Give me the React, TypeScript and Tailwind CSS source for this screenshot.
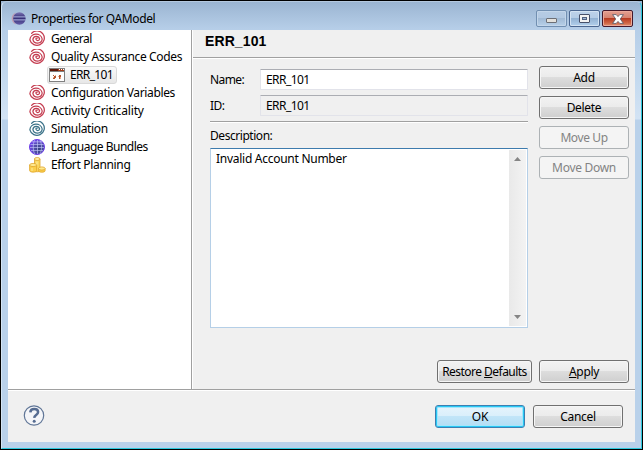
import type { ReactNode } from "react";

function Spiral({ color }: { color: string }) {
  return (
    <svg width="17" height="16" viewBox="0 0 17 16" fill="none" stroke={color} strokeLinecap="round">
      <path strokeWidth="1.250" d="M2.600 2.300A7.300 7.200 0 1 1 .9 8.800A6.200 5.800 0 0 1 13.200 8A4.700 4.600 0 0 1 3.900 8.300A3.400 3.300 0 0 1 10.600 8A1.900 1.900 0 0 1 6.900 8.200Q7 6.900 8.200 7.100" />
    </svg>
  );
}

function FormIcon() {
  return (
    <svg width="16" height="14" viewBox="0 0 16 14" shapeRendering="crispEdges">
      <rect width="16" height="14" fill="#808080" />
      <rect x="1" y="4" width="14" height="9" fill="#fff" />
      <rect x="1" y="1" width="14" height="2" fill="#a33b17" />
      <path fill="#5d170b" d="M1 1h8v2H1z" />
      <path fill="#fff" d="M10 1h1v1h-1zM12 1h1v1h-1zM14 1h1v1h-1z" />
      <path fill="#b4552e" d="M4 7h1v1H4zM5 8h2v2H5zM4 10h2v1H4zM10 7h2v2h-2zM10 9h1v2h-1z" />
      <path fill="#e9a88a" d="M6 7h1v1H6zM4 9h1v1H4zM9 8h1v1H9zM11 9h1v2h-1z" />
    </svg>
  );
}

function GlobeIcon() {
  return (
    <svg width="16" height="16" viewBox="0 0 16 16" fill="none">
      <defs>
        <radialGradient id="globe" cx=".65" cy=".65" r=".65">
          <stop stopColor="#35437e" />
          <stop offset=".6" stopColor="#5550ae" />
          <stop offset="1" stopColor="#7044e8" />
        </radialGradient>
      </defs>
      <circle cx="8" cy="8" r="7.500" fill="url(#globe)" stroke="#6d3ee8" />
      <path stroke="#c3c5fa" strokeWidth=".65" d="M1.500 5.500h13M1 8.500h14M2 11.500h12M3 2.800h10M5.500 1C3.800 5 3.800 11 5.500 15M8.500 1v14M11 1c2 4 2 10 0 14" />
    </svg>
  );
}

function CoinsIcon() {
  return (
    <svg width="17" height="16" viewBox="0 0 17 16" stroke="#dfa52b" strokeWidth=".8">
      <path fill="#fbd75e" d="M5.500 2v12c0 1 5.500 1 5.500 0V2z" />
      <ellipse cx="8.200" cy="2" rx="2.800" ry="1.500" fill="#fff0a8" />
      <path fill="#fbcf4b" d="M.6 8v5.500c0 2.200 7 2.200 7 0V8z" />
      <ellipse cx="4.100" cy="8" rx="3.500" ry="1.600" fill="#ffe98d" />
      <path fill="#fbcf4b" d="M9.600 11.500v2.200c0 2 6.500 2 6.500 0v-2.200z" />
      <ellipse cx="12.800" cy="11.500" rx="3.300" ry="1.600" fill="#ffe98d" />
      <path fill="none" stroke="#fff2b0" d="M8 4.500v3M3 11v3" />
    </svg>
  );
}

function EclipseIcon() {
  return (
    <svg width="15" height="13" viewBox="0 0 15 13">
      <defs>
        <linearGradient id="sphere" x1="0" x2="0" y1="0" y2="1">
          <stop stopColor="#7c74b5" />
          <stop offset=".45" stopColor="#342d75" />
          <stop offset="1" stopColor="#655ea8" />
        </linearGradient>
      </defs>
      <path d="M5 .6C-.8 2.500-.8 10.500 5 12.400 2 9 2 4 5 .6" fill="#bf9db2" />
      <circle cx="8.400" cy="6.500" r="6.200" fill="url(#sphere)" />
      <path d="M2.500 4.900h12M2.500 7.900h12" stroke="#b9c3ec" strokeWidth=".9" />
    </svg>
  );
}

const tree: { label: string; icon: ReactNode; cls: string; child?: boolean }[] = [
  { label: "General", icon: <Spiral color="#c43c50" />, cls: "tracking-[-0.5px]" },
  { label: "Quality Assurance Codes", icon: <Spiral color="#c43c50" />, cls: "tracking-[-0.35px]" },
  { label: "ERR_101", icon: <FormIcon />, cls: "tracking-[-0.65px]", child: true },
  { label: "Configuration Variables", icon: <Spiral color="#c43c50" />, cls: "tracking-[-0.37px]" },
  { label: "Activity Criticality", icon: <Spiral color="#c43c50" />, cls: "tracking-[-0.15px]" },
  { label: "Simulation", icon: <Spiral color="#3b7288" />, cls: "tracking-[-0.35px]" },
  { label: "Language Bundles", icon: <GlobeIcon />, cls: "tracking-[-0.5px]" },
  { label: "Effort Planning", icon: <CoinsIcon />, cls: "tracking-[-0.33px]" },
];

function Button({ children, disabled, primary, width = "w-[90px]", tracking = "tracking-[-0.3px]" }: { children: ReactNode; disabled?: boolean; primary?: boolean; width?: string; tracking?: string }) {
  const look = disabled
    ? "border-[#adb2b5] bg-[#f4f4f4] text-[#838383]"
    : primary
      ? "border-[#3c7fb1] bg-[linear-gradient(#e6f4fc_0%,#d9effb_49%,#c1e5f8_50%,#b2ddf4_100%)] text-black shadow-[inset_0_0_0_1px_#28c8f5,inset_0_0_0_2px_#a5e6fb]"
      : "border-[#707070] bg-[linear-gradient(#f2f2f2_0%,#ebebeb_49%,#dddddd_50%,#cfcfcf_100%)] text-black shadow-[inset_0_0_0_1px_#f6f6f6]";
  return (
    <button disabled={disabled} className={`flex h-[23px] shrink-0 items-center justify-center rounded-[3px] border whitespace-pre ${width} ${tracking} ${look}`}>
      <span>{children}</span>
    </button>
  );
}

function Field({ label, value, readOnly, tracking }: { label: string; value: string; readOnly?: boolean; tracking: string }) {
  return (
    <label className="flex h-[21px] items-center">
      <span className={`w-[50px] ${tracking}`}>{label}</span>
      <span className={`flex h-[21px] flex-1 items-center rounded-[1px] border border-[#e2e3ea] border-t-[#abadb3] pl-[5px] tracking-[-0.55px] ${readOnly ? "bg-[#f0f0f0]" : "bg-white"}`}>{value}</span>
    </label>
  );
}

function WindowControls() {
  return (
    <div className="mt-[8px] mr-[2px] flex gap-[2px]">
      <div className="flex h-[17px] w-[31px] items-end justify-center rounded-[2px] border border-[#718fb1] bg-[linear-gradient(#b7cce4_0%,#b2c9e2_48%,#a1bad5_50%,#b7d0e9_100%)] pb-[3px] shadow-[inset_0_0_0_1px_#c3d6ea]">
        <span className="h-[5px] w-[11px] rounded-[1px] border border-[#6c6f76] bg-[#e3e1dc]" />
      </div>
      <div className="flex h-[17px] w-[31px] items-center justify-center rounded-[2px] border border-[#4a6690] bg-[linear-gradient(#bdd2e9_0%,#b4cce6_48%,#93b2d3_50%,#b2d0ed_100%)] shadow-[inset_0_0_0_1px_#d2e2f2]">
        <span className="flex h-[9px] w-[11px] items-center justify-center rounded-[1px] border border-[#46506a] bg-[#f2f2f2]">
          <span className="h-[3px] w-[5px] border border-[#52617f] bg-[#9db8d7]" />
        </span>
      </div>
      <div className="flex h-[17px] w-[31px] items-center justify-center rounded-[2px] border border-[#43182b] bg-[linear-gradient(#e3a092_0%,#d6826f_47%,#b83c22_50%,#cf6546_80%,#df9370_100%)] shadow-[inset_0_0_0_1px_#eba99a]">
        <svg width="12" height="10" viewBox="0 0 12 10">
          <path d="M.6.600h3.600L6 2.600 7.800.600h3.600L8.300 5l3.100 4.400H7.800L6 7.400 4.200 9.400H.6L3.700 5z" fill="#fff" stroke="#535666" strokeWidth=".8" />
        </svg>
      </div>
    </div>
  );
}

export default function App() {
  return (
    <div className="flex h-[450px] w-[643px] flex-col overflow-hidden border-x border-y border-black bg-[linear-gradient(#9ab4d1_0px,#b6cee8_28px,#c5daef_80px,#d3e3f4_118px,#b9d1ea_119px)] font-['Noto_Sans','Open_Sans',sans-serif] text-[12px] leading-[18px] text-black">
      <div className="flex min-h-0 flex-1 flex-col rounded-t-[6px] border-r border-b border-t border-l border-t-[#b5c9df] border-r-[#2cc8dd] border-b-[#2cc8dd] border-l-[#d5e5f4] px-[6px] pb-[6px]">
        <header className="flex h-[28px] shrink-0 justify-between">
          <div className="flex h-[33px] items-center gap-[5px] pl-[3px]">
            <EclipseIcon />
            <span className="tracking-[-0.4px]">Properties for QAModel</span>
          </div>
          <WindowControls />
        </header>
        <main className="flex min-h-0 flex-1 flex-col bg-[#f0f0f0]">
          <div className="flex h-[359px] shrink-0">
            <nav className="w-[184px] border-r border-[#a0a0a0] bg-white">
              {tree.map((t) =>
                t.child ? (
                  <div key={t.label} className="ml-[39px] flex h-[18px] w-[70px] items-center gap-[5px] rounded-[3px] border border-[#d9d9d9] bg-linear-to-b from-[#fafafa] to-[#e7e7e7] pl-px">
                    {t.icon}
                    <span className={t.cls}>{t.label}</span>
                  </div>
                ) : (
                  <div key={t.label} className="flex h-[18px] items-center pl-[21px]">
                    <span className="w-[22px]">{t.icon}</span>
                    <span className={t.cls}>{t.label}</span>
                  </div>
                ),
              )}
            </nav>
            <section className="flex flex-1 flex-col border-l border-white">
              <h1 className="h-[28px] shrink-0 border-b border-[#a0a0a0] pl-[12px] font-['Liberation_Sans',sans-serif] text-[14px] leading-[23px] font-bold tracking-[0.1px]">ERR_101</h1>
              <div className="flex flex-1 flex-col border-t border-white pt-[7px] pr-[6px] pl-[17px]">
                <div className="flex justify-between">
                  <div className="flex w-[318px] flex-col pt-[3px]">
                    <Field label="Name:" value="ERR_101" tracking="tracking-[-0.6px]" />
                    <div className="h-[5px]" />
                    <Field label="ID:" value="ERR_101" tracking="tracking-[-0.5px]" readOnly />
                    <div className="mt-[5px] h-[2px] border-t border-b border-t-[#a0a0a0] border-b-white" />
                    <div className="mt-[4px] h-[21px] leading-[18px] tracking-[-0.45px]">Description:</div>
                    <div className="flex h-[180px] justify-between border border-[#b5cfe7] border-t-[#3d7bad] bg-white pt-px pr-px pb-px">
                      <p className="pl-[5px] tracking-[-0.27px]">Invalid Account Number</p>
                      <div className="flex w-[17px] flex-col items-center justify-between bg-[linear-gradient(90deg,#e9e9e9,#f3f3f3)] pt-[7px] pb-[7px]">
                        <svg width="7" height="4" viewBox="0 0 7 4"><path d="M3.500 0L7 4H0z" fill="#858585" /></svg>
                        <svg width="7" height="4" viewBox="0 0 7 4"><path d="M0 0h7L3.500 4z" fill="#858585" /></svg>
                      </div>
                    </div>
                  </div>
                  <div className="flex flex-col gap-[7px]">
                    <Button>Add</Button>
                    <Button>Delete</Button>
                    <Button disabled tracking="tracking-[-0.4px]">Move Up</Button>
                    <Button disabled>Move Down</Button>
                  </div>
                </div>
                <div className="mt-auto mb-[6px] flex justify-end gap-[7px]">
                  <Button width="w-[95px]" tracking="tracking-[-0.53px]">Restore <u>D</u>efaults</Button>
                  <Button><u>A</u>pply</Button>
                </div>
              </div>
            </section>
          </div>
          <footer className="flex flex-1 items-start justify-between border-t border-[#a0a0a0] pr-[12px] pl-[15px] shadow-[inset_0_1px_white]">
            <svg className="mt-[14px]" width="23" height="23" viewBox="0 0 23 23" fill="none">
              <circle cx="11" cy="11.500" r="9.700" fill="#f4f5f8" stroke="#607697" strokeWidth="1.200" />
              <path d="M7.300 8.300c.2-2.200 1.700-3.300 3.900-3.300 2.300 0 3.900 1.200 3.900 3.100 0 3-3.700 2.900-3.900 5.700" stroke="#566c91" strokeWidth="2.500" />
              <circle cx="11.200" cy="17.200" r="1.500" fill="#566c91" />
            </svg>
            <div className="mt-[15px] flex gap-[8px]">
              <Button primary tracking="tracking-[-0.1px]">OK</Button>
              <Button>Cancel</Button>
            </div>
          </footer>
        </main>
      </div>
    </div>
  );
}
